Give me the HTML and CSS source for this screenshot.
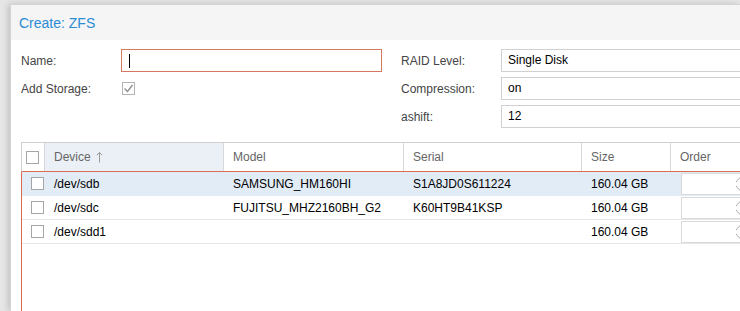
FILE: index.html
```html
<!DOCTYPE html>
<html lang="en">
<head>
  <meta charset="UTF-8" />
  <meta name="viewport" content="width=device-width, initial-scale=1.0" />
  <title>Create: ZFS</title>
  <link rel="stylesheet" href="styles.css">
</head>
<body>
  <div class="window">
    <div class="win-header">
      <span class="win-title">Create: ZFS</span>
    </div>

    <div class="win-body">
      <div class="form">
        <div class="form-col left">
          <div class="field-row">
            <label class="field-label">Name:</label>
            <div class="text-field invalid"><span class="caret"></span></div>
          </div>
          <div class="field-row">
            <label class="field-label">Add Storage:</label>
            <span class="checkbox checked">
              <svg width="13" height="13" viewBox="0 0 13 13"><path d="M2.5 6.5 L5.5 9.5 L10.5 3" fill="none" stroke="#8c8c8c" stroke-width="1.3"/></svg>
            </span>
          </div>
        </div>

        <div class="form-col right">
          <div class="field-row">
            <label class="field-label">RAID Level:</label>
            <div class="text-field">Single Disk</div>
          </div>
          <div class="field-row">
            <label class="field-label">Compression:</label>
            <div class="text-field">on</div>
          </div>
          <div class="field-row">
            <label class="field-label">ashift:</label>
            <div class="text-field">12</div>
          </div>
        </div>
      </div>

      <div class="grid">
        <div class="grid-header">
          <div class="hcell check-cell"><span class="checkbox"></span></div>
          <div class="hcell sorted">Device
            <svg class="sort-arrow" width="7" height="12" viewBox="0 0 7 12"><path d="M3.5 1.5 V11.5 M0.8 4.2 L3.5 1.5 L6.2 4.2" fill="none" stroke="#9a9a9a" stroke-width="1"/></svg>
          </div>
          <div class="hcell">Model</div>
          <div class="hcell">Serial</div>
          <div class="hcell">Size</div>
          <div class="hcell last">Order</div>
        </div>

        <div class="grid-body">
          <div class="grid-row selected">
            <div class="cell check-cell"><span class="checkbox"></span></div>
            <div class="cell">/dev/sdb</div>
            <div class="cell">SAMSUNG_HM160HI</div>
            <div class="cell">S1A8JD0S611224</div>
            <div class="cell">160.04 GB</div>
            <div class="cell order-cell">
              <div class="spin-field">
                <svg width="10" height="18" viewBox="0 0 10 18"><path d="M1 7 L5 2.5 L9 7 M1 11 L5 15.5 L9 11" fill="none" stroke="#a8a8a8" stroke-width="1"/></svg>
              </div>
            </div>
          </div>
          <div class="grid-row">
            <div class="cell check-cell"><span class="checkbox"></span></div>
            <div class="cell">/dev/sdc</div>
            <div class="cell">FUJITSU_MHZ2160BH_G2</div>
            <div class="cell">K60HT9B41KSP</div>
            <div class="cell">160.04 GB</div>
            <div class="cell order-cell">
              <div class="spin-field">
                <svg width="10" height="18" viewBox="0 0 10 18"><path d="M1 7 L5 2.5 L9 7 M1 11 L5 15.5 L9 11" fill="none" stroke="#a8a8a8" stroke-width="1"/></svg>
              </div>
            </div>
          </div>
          <div class="grid-row">
            <div class="cell check-cell"><span class="checkbox"></span></div>
            <div class="cell">/dev/sdd1</div>
            <div class="cell"></div>
            <div class="cell"></div>
            <div class="cell">160.04 GB</div>
            <div class="cell order-cell">
              <div class="spin-field">
                <svg width="10" height="18" viewBox="0 0 10 18"><path d="M1 7 L5 2.5 L9 7 M1 11 L5 15.5 L9 11" fill="none" stroke="#a8a8a8" stroke-width="1"/></svg>
              </div>
            </div>
          </div>
        </div>
      </div>
    </div>
  </div>
</body>
</html>
```

FILE: styles.css
```css
body {
  margin: 0;
  height: 311px;
  overflow: hidden;
  background: #e6e6e6;
  font-family: 'Liberation Sans', Arial, sans-serif;
  font-size: 12px;
  color: #000;
}

/* the window runs past the right and bottom edges of the view */
.window {
  margin: 4px 0 0 10px;
  width: 730px;
  height: 307px;
  box-sizing: border-box;
  overflow: hidden;
  background: white;
  border: 1px solid #d4d4d4;
  border-right: none;
  border-bottom: none;
  box-shadow: -2px 0 6px rgba(0, 0, 0, 0.16);
}

.win-header {
  height: 35px;
  background: #f5f5f5;
  padding-left: 8px;
  display: flex;
  align-items: center;
}

.win-title {
  font-size: 14px;
  color: #2b8bd5;
}

.win-body {
  padding: 9px 0 0 10px;
}

/* form */
.form {
  display: flex;
  gap: 19px;
}

.form-col {
  display: flex;
  flex-direction: column;
  gap: 5px;
}

.form-col.left {
  width: 361px;
}

.form-col.right {
  flex: 1;
}

.field-row {
  display: flex;
  align-items: center;
  height: 23px;
}

.field-label {
  width: 100px;
  flex: none;
  color: #444;
}

.text-field {
  flex: 1;
  height: 23px;
  box-sizing: border-box;
  border: 1px solid #d0d0d0;
  padding: 0 6px;
  line-height: 21px;
  background: white;
  display: flex;
  align-items: center;
}

.form-col.right .text-field {
  border-right: none;
}

.text-field.invalid {
  border-color: #d57a60;
  padding-left: 7px;
}

.caret {
  display: inline-block;
  width: 1px;
  height: 14px;
  background: #000;
}

.checkbox {
  display: inline-block;
  width: 13px;
  height: 13px;
  box-sizing: border-box;
  border: 1px solid #a6a6a6;
  background: white;
}

.checkbox.checked {
  border-color: #b4b4b4;
}

.checkbox.checked svg {
  display: block;
  margin: -1px;
}

.form .checkbox {
  margin-left: 1px;
}

/* grid */
.grid {
  margin-top: 14px;
}

.grid-header,
.grid-row {
  display: grid;
  grid-template-columns: 23px 179px 180px 178px 89px 1fr;
}

.grid-header {
  height: 30px;
  box-sizing: border-box;
  border: 1px solid #d0d0d0;
  border-right: none;
  border-bottom: 1px solid #d96d52;
}

.hcell {
  display: flex;
  align-items: center;
  padding-left: 9px;
  color: #666;
  border-right: 1px solid #d8d8d8;
}

.hcell.last {
  border-right: none;
}

.hcell.sorted {
  background: #eaf0f6;
}

.sort-arrow {
  margin-left: 5px;
}

.check-cell {
  padding-left: 5px;
}

.hcell.check-cell {
  padding-left: 4px;
}

.grid-body {
  height: 140px;
  border-left: 1px solid #d96d52;
}

.grid-row {
  height: 24px;
  box-sizing: border-box;
  border-bottom: 1px solid #e6e6e6;
}

.grid-row.selected {
  background: #e2ecf7;
  border-bottom-color: #e2ecf7;
}

.cell {
  display: flex;
  align-items: center;
  padding-left: 9px;
  white-space: nowrap;
  overflow: hidden;
}

.order-cell {
  padding-left: 10px;
}

.spin-field {
  flex: none;
  width: 72px;
  height: 22px;
  box-sizing: border-box;
  border: 1px solid #dadada;
  background: white;
  display: flex;
  align-items: center;
  justify-content: flex-end;
  padding-right: 7px;
}
```
